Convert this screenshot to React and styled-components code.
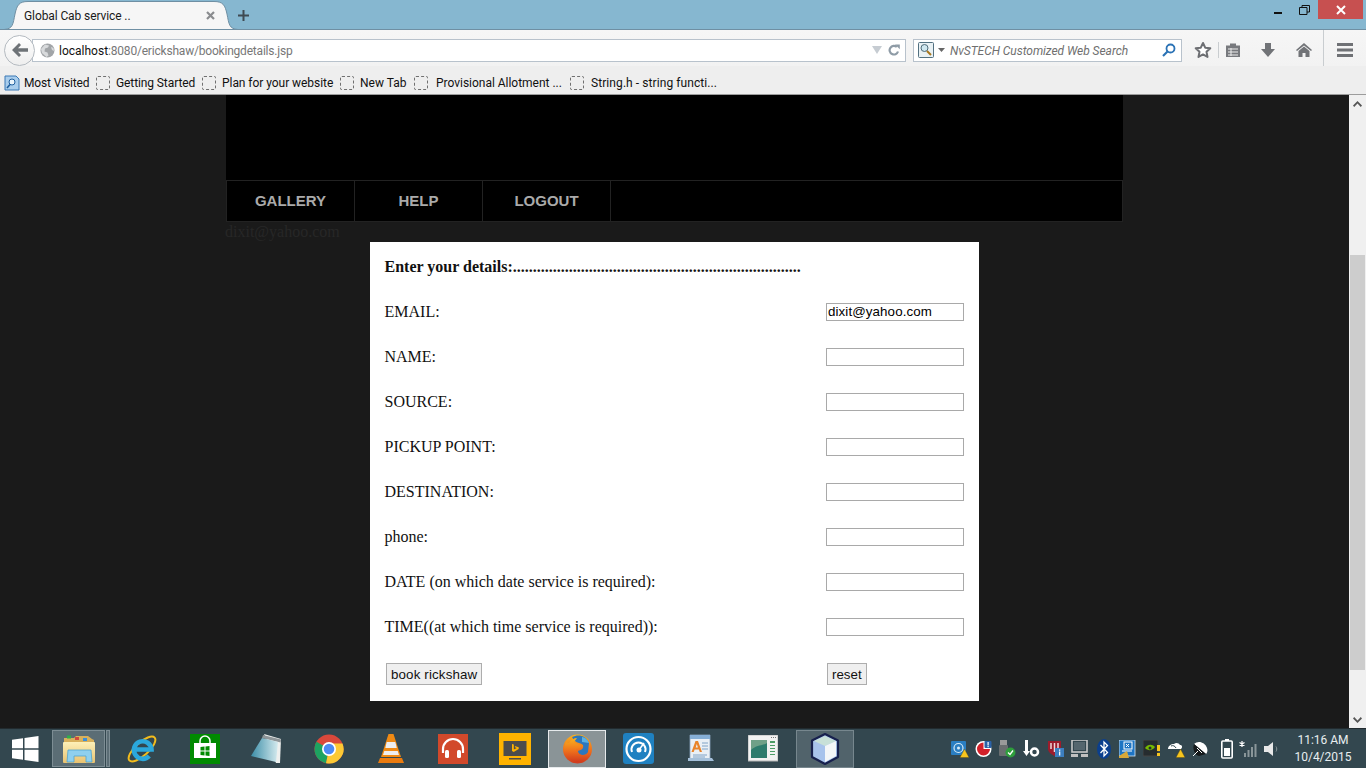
import React from 'react';
import styled, { createGlobalStyle } from 'styled-components';

const Global = createGlobalStyle`
  html, body { margin: 0; padding: 0; height: 768px; overflow: hidden; background: #1a1a1a; }
  #root { height: 768px; }
  * { box-sizing: border-box; }
`;
const UI = `"Roboto", "Noto Sans", sans-serif`;

const Screen = styled.div`display:flex;flex-direction:column;width:1366px;height:768px;overflow:hidden;`;
const TitleBar = styled.div`height:30px;background:#86b7d0;border-bottom:1px solid #6f8fa3;display:flex;align-items:flex-start;flex:none;padding-left:4px;`;
const Tab = styled.div`position:relative;width:234px;height:30px;margin-bottom:-1px;display:flex;align-items:center;padding:1px 0 0 20px;font:12px ${UI};color:#1a1a1a;z-index:1;`;
const TabShape = styled.svg`position:absolute;left:0;top:0;z-index:-1;`;
const TabTitle = styled.span`flex:1;letter-spacing:-.1px;`;
const TabClose = styled.svg`margin-right:23px;`;
const NewTab = styled.svg`margin:10px 0 0 0;`;
const WinButtons = styled.div`margin-left:auto;display:flex;height:19px;align-items:center;padding-right:3px;`;
const WinBtn = styled.div`width:${p => p.$w}px;height:19px;display:flex;align-items:center;justify-content:center;background:${p => p.$close ? '#c75050' : 'transparent'};`;

const NavBar = styled.div`height:36px;background:linear-gradient(#f6f6f6,#f2f2f2);display:flex;align-items:center;flex:none;padding:4px 0 0 4px;`;
const BackBtn = styled.div`width:31px;height:31px;border-radius:50%;background:linear-gradient(#fff,#eee);border:1px solid #b4bac0;display:flex;align-items:center;justify-content:center;z-index:1;flex:none;`;
const UrlBar = styled.div`margin-left:-3px;flex:none;width:874px;height:23px;background:#fff;border:1px solid #b8c2cc;display:flex;align-items:center;padding:0 5px 0 7px;font:12px ${UI};`;
const Host = styled.span`color:#111;margin-left:4px;padding-top:2px;`;
const Path = styled.span`color:#777;flex:1;letter-spacing:-.2px;padding-top:2px;`;
const SearchBar = styled.div`margin-left:7px;width:269px;height:23px;background:#fff;border:1px solid #b8c2cc;display:flex;align-items:center;padding:0 5px 0 4px;font:italic 12px ${UI};color:#6f6f6f;flex:none;`;
const SearchText = styled.span`flex:1;margin-left:5px;letter-spacing:-.05px;padding-top:2px;`;
const ToolIcons = styled.div`display:flex;align-items:center;height:36px;margin:-4px 0 0 10px;flex:none;`;
const ToolSlot = styled.div`width:${p => p.$w}px;display:flex;align-items:center;justify-content:center;padding-top:4px;`;
const ToolSep = styled.div`width:1px;height:${p => p.$h}px;margin:${p => p.$m};background:#c9cdd0;`;

const Bookmarks = styled.div`height:29px;background:#eeeeee;border-bottom:1px solid #9c9c9c;display:flex;align-items:center;padding:5px 0 0 4px;flex:none;font:12px ${UI};color:#111;`;
const Bookmark = styled.div`display:flex;align-items:center;gap:${p => p.$gap}px;width:${p => p.$w}px;white-space:nowrap;letter-spacing:${p => p.$ls}px;`;
const DashIcon = styled.span`width:14px;height:14px;border:1px dashed #707070;border-radius:2px;flex:none;`;

const Middle = styled.div`flex:1;display:flex;min-height:0;`;
const Viewport = styled.div`flex:1;background:#1a1a1a;overflow:hidden;`;
const Wrapper = styled.div`width:897px;margin:0 auto;`;
const Banner = styled.div`height:85px;background:#000;`;
const Menu = styled.nav`height:42px;background:#000;border:1px solid #222;display:flex;`;
const MenuItem = styled.div`width:${p => p.$w}px;border-right:1px solid #222;display:flex;align-items:center;justify-content:center;padding-bottom:1px;font:bold 15px "Liberation Sans",sans-serif;color:#aaaaaa;`;
const Ghost = styled.div`height:20px;font:16px/20px "Liberation Serif",serif;color:#272727;margin-left:-1px;`;
const FormCard = styled.form`width:609px;margin:0 auto;background:#fff;padding:2px 15px 2px 14.5px;font:16px "Liberation Serif",serif;color:#111;`;
const Row = styled.div`height:${p => p.$h || 45}px;display:grid;grid-template-columns:441.5px 138px;align-items:center;`;
const Heading = styled.div`height:45px;display:flex;align-items:center;font-weight:bold;`;
const Field = styled.input`width:138px;height:18px;margin:0;padding:0 0 0 1px;border:1px solid #a9a9a9;background:#fff;font:13.33px "Liberation Sans",sans-serif;letter-spacing:.1px;color:#000;outline:none;`;
const Btn = styled.button`justify-self:start;margin:0 0 0 ${p => p.$ml}px;height:22px;padding:0 4px;background:#efefef;border:1px solid #adadad;font:13.33px "Liberation Sans",sans-serif;letter-spacing:${p => p.$ls || 0}px;color:#111;`;

const Scrollbar = styled.div`width:17px;background:#f0f0f0;display:flex;flex-direction:column;align-items:center;flex:none;`;
const ScrollArrow = styled.svg`margin-top:${p => p.$mt}px;`;
const Thumb = styled.div`width:15px;height:415px;background:#cdcdcd;margin-top:148px;`;

const Taskbar = styled.div`height:40px;background:#33474f;border-top:1px solid #222b2f;display:flex;align-items:center;flex:none;color:#fff;`;
const StartSlot = styled.div`width:52px;height:39px;display:flex;align-items:center;justify-content:center;padding-right:2px;`;
const PinnedBtn = styled.div`width:53px;height:37px;background:#5b6d75;border:1px solid #7d8d94;display:flex;align-items:center;justify-content:center;`;
const StackEdge = styled.div`width:4px;height:37px;background:#5b6d75;border:1px solid #7d8d94;margin:0 2px 0 1px;`;
const Slot = styled.div`width:62px;height:39px;display:flex;align-items:center;justify-content:center;flex:none;`;
const ActiveBtn = styled.div`width:58px;height:38px;display:flex;align-items:center;justify-content:center;background:${p => p.$bright ? '#8a9497' : '#51636b'};border:1px solid ${p => p.$bright ? '#e6eaec' : '#77878e'};`;
const Tray = styled.div`display:flex;align-items:center;margin-left:auto;padding-right:4px;flex:none;`;
const TrayIcon = styled.div`width:${p => p.$w}px;margin-left:${p => p.$ml || 0}px;height:24px;display:flex;align-items:center;justify-content:center;flex:none;`;
const Clock = styled.div`width:78px;flex:none;text-align:center;font:12px/17px ${UI};color:#e8eef0;padding-top:1px;white-space:nowrap;`;

const Star = () => <svg width="18" height="18" viewBox="0 0 18 18"><path d="M9 2l2.200 4.700 5.100.6-3.800 3.500 1 5.100L9 13.400l-4.500 2.500 1-5.100-3.800-3.500 5.100-.6z" fill="#fff" stroke="#6d6f73" strokeWidth="2" strokeLinejoin="round"/></svg>;
const Clip = () => <svg width="16" height="16" viewBox="0 0 16 16"><path d="M1 3.500h4V1.500h6v2h4V15H1z" fill="#77797d"/><path d="M3 7h10M3 10h10M3 13h10M6 6v8" stroke="#eee" strokeWidth="1"/></svg>;
const Down = () => <svg width="16" height="16" viewBox="0 0 16 16"><path d="M5 1h6v6h4l-7 8-7-8h4z" fill="#717377"/></svg>;
const Home = () => <svg width="16" height="16" viewBox="0 0 16 16"><path d="M8 1l8 7-1 1-7-5.600L1 9 0 8z" fill="#717377"/><path d="M2.500 9L8 4.600 13.500 9v6H9.500v-4h-3v4h-4z" fill="#717377"/></svg>;
const Burger = () => <svg width="16" height="14" viewBox="0 0 16 14"><path d="M0 0h16v3H0zM0 5.500h16v3H0zM0 11h16v3H0z" fill="#6f7175"/></svg>;
const Globe = () => <svg width="15" height="15" viewBox="0 0 15 15"><circle cx="7.500" cy="7.500" r="7" fill="#a2a5a8"/><path d="M5 1.500l4 1-1 2-3 1-.5 3 3 1 1 3-2 1.500L2 10 1 6zM11 4l2.500 1 .5 3-2-1z" fill="#d8dadc"/></svg>;

const WinLogo = () => <svg width="27" height="26" viewBox="0 0 27 26"><path d="M0 3.700L11 2.200V12.200H0zM12.500 2L26.500 0V12.200H12.500zM0 13.800H11V23.800L0 22.300zM12.500 13.800H26.500V26L12.500 24z" fill="#fff"/></svg>;
const Folder = () => <svg width="32" height="30" viewBox="0 0 32 30"><defs><linearGradient id="fo" x1="0" y1="0" x2="0" y2="1"><stop offset="0" stopColor="#fdf0b8"/><stop offset="1" stopColor="#e9c270"/></linearGradient></defs><path d="M1 4h10l2-2h12l4 3 2 1v22H1z" fill="#d8b05c"/><rect x="4" y="1.500" width="4" height="3" fill="#2fae4a"/><rect x="12" y="3" width="4" height="3" fill="#d24a3c"/><rect x="20" y="4" width="4" height="3" fill="#3c8fd8"/><rect x="0" y="8" width="32" height="21" rx="1" fill="url(#fo)"/><path d="M5 16h23l1 12h-6v-6H11v6H4z" fill="#8fd0ee" stroke="#4fa3cf" strokeWidth=".8"/></svg>;
const IE = () => <svg width="32" height="32" viewBox="0 0 32 32"><ellipse cx="15" cy="16" rx="17" ry="6.500" transform="rotate(-42 15 16)" fill="none" stroke="#f2bc1c" strokeWidth="2"/><path d="M7.500 16.500h17a8.800 8.800 0 1 0-2.300 6.500" fill="none" stroke="#2ba8dc" strokeWidth="4.600"/></svg>;
const Store = () => <svg width="30" height="30" viewBox="0 0 30 30"><rect width="30" height="30" fill="#008a00"/><path d="M4 9h22v15H4z" fill="#fff"/><path d="M10 9V7a5 5 0 0 1 10 0v2" fill="none" stroke="#fff" strokeWidth="1.500"/><path d="M10.500 13l4-.5V16.500h-4zM15.500 12.400l4-.5V16.500h-4zM10.500 17.500h4v4l-4-.5zM15.500 17.500h4V22l-4-.5z" fill="#008a00"/></svg>;
const Notepad = () => <svg width="32" height="30" viewBox="0 0 32 30"><defs><linearGradient id="np" x1="0" y1="0" x2="1" y2="0"><stop offset="0" stopColor="#3c8ea8"/><stop offset="1" stopColor="#d4eaee"/></linearGradient></defs><path d="M13 0L30 5 29 29 25 29z" fill="#eef0ee"/><path d="M12 1l18 4.500-.3 3L11 4z" fill="#8f9699"/><path d="M11 4L27 8 25 28 0 22z" fill="url(#np)"/></svg>;
const Chrome = () => <svg width="30" height="30" viewBox="0 0 30 30"><circle cx="15" cy="15" r="14.500" fill="#d9483b"/><path d="M15 15L2.500 7.700A14.500 14.500 0 0 0 12 29.200z" fill="#1da361"/><path d="M15 15l-3 14.200A14.500 14.500 0 0 0 28.500 9.500H15z" fill="#fcc934"/><circle cx="15" cy="15" r="7" fill="#fff"/><circle cx="15" cy="15" r="5.300" fill="#4c8bf5"/></svg>;
const VLC = () => <svg width="28" height="30" viewBox="0 0 28 30"><path d="M11.500 0h5L24 23H4z" fill="#f08a13"/><path d="M9.700 8h8.600l1.500 6H8.300zM7.300 17h13.400l1.300 4H6z" fill="#eeeeee"/><path d="M3 24h22l2 5H1z" fill="#ea7b0f"/></svg>;
const Music = () => <svg width="30" height="30" viewBox="0 0 30 30"><rect width="30" height="30" fill="#d2492b"/><path d="M5 19v-4a10 10 0 0 1 20 0v4" fill="none" stroke="#fff" strokeWidth="2.200"/><rect x="7" y="16" width="4" height="8" rx="1.500" fill="#fff"/><rect x="19" y="16" width="4" height="8" rx="1.500" fill="#fff"/></svg>;
const Bing = () => <svg width="32" height="32" viewBox="0 0 32 32"><rect width="32" height="32" fill="#ffb300"/><rect x="4.500" y="8" width="23" height="15" fill="#4c4c4c"/><rect x="10" y="25" width="12" height="1.500" fill="#4c4c4c"/><path d="M13 11l1.800.6v5l3-1.500-1.500-.7-.6-1.500 4 1.400v1.600l-5 3-1.700-1z" fill="#ffb300"/></svg>;
const Firefox = () => <svg width="31" height="31" viewBox="0 0 31 31"><defs><linearGradient id="ff" x1="0" y1="0" x2="0" y2="1"><stop offset="0" stopColor="#f9b21e"/><stop offset=".55" stopColor="#ee6f1c"/><stop offset="1" stopColor="#cf3a1e"/></linearGradient></defs><circle cx="15.500" cy="16" r="14.500" fill="url(#ff)"/><path d="M10 4c6-3 14-2 17 6l-1 9c-1 2-3 3-5 3-3 0-5-2-5-4 3-1 6-2 5-6-2-2-6-2-8-4-1-1-2-2-3-4z" fill="#2c77bd"/><path d="M20 4c3 0 6 3 7 6l-7-1z" fill="#5ab0e2"/><path d="M4 9c1 1 2 1 3 1 2-3 5-5 8-5-1 2-3 3-3 4 2 2 5 2 7 4 0 2-3 3-5 3 0 4 4 6 7 6 4 0 6-2 7-4l1 2c-1 5-7 9-13 9C9 29 2 23 2 16c0-2 1-5 2-7z" fill="url(#ff)"/></svg>;
const Gauge = () => <svg width="32" height="32" viewBox="0 0 32 32"><rect width="31" height="31" rx="3" fill="#1f81c1"/><circle cx="15.500" cy="16" r="12" fill="none" stroke="#fff" strokeWidth="2.200"/><path d="M9 19a7 7 0 1 1 13 0" fill="none" stroke="#fff" strokeWidth="2"/><circle cx="16" cy="17" r="2.500" fill="#fff"/><path d="M16 17l5-7" stroke="#fff" strokeWidth="1.500"/></svg>;
const Wordpad = () => <svg width="26" height="30" viewBox="0 0 26 30"><path d="M2 1h20v25H2z" fill="#e9eff5" stroke="#8ba3bd" strokeWidth=".8"/><path d="M2 1h20v4H2z" fill="#86afd6"/><path d="M0 24h24l2 3H0z" fill="#a5c0da"/><path d="M7.500 7h2.500l4 11h-2.200l-.9-2.500H6.600L5.700 18H3.500zm.2 6.500h2.200L8.800 10z" fill="#e9842a"/><path d="M14 9h6M14 12h6M14 15h6M5 21h14M5 23h12" stroke="#7fa2c6" strokeWidth="1"/></svg>;
const Browser = () => <svg width="30" height="27" viewBox="0 0 30 27"><rect width="30" height="26" fill="#f2f2f2" stroke="#b5b5b5"/><rect x="3" y="5" width="16" height="18" fill="#6fa088"/><path d="M3 15c6-6 12-4 16-7v15H3z" fill="#2d7b6d"/><path d="M22 6h5v2h-5zM22 10h5v1h-5zM22 13h5v1h-5zM22 16h5v1h-5zM22 19h5v1h-5z" fill="#4d9c66"/><path d="M23 2h1v1h-1zM25 2h1v1h-1zM27 2h1v1h-1z" fill="#777"/></svg>;
const Cube = () => <svg width="30" height="32" viewBox="0 0 30 32"><path d="M15 1L28 7.500V24L15 31 2 24V7.500z" fill="#a8c3ec" stroke="#17204d" strokeWidth="2.200" strokeLinejoin="round"/><path d="M15 3L26 8 15 13 4 8z" fill="#c8e0d8"/><path d="M15 13L26 8v15L15 29z" fill="#f4f6f8"/></svg>;

const Warn = ({ x = 9, y = 9 }) => <path transform={`translate(${x} ${y})`} d="M4.500 0L9 8.500H0z" fill="#f7c51e" stroke="#5a4a10" strokeWidth=".4"/>;
const T1 = () => <svg width="18" height="18" viewBox="0 0 18 18"><rect x="0" y="1" width="15" height="14" rx="1" fill="#2a7ec2"/><circle cx="7.500" cy="8" r="4.500" fill="none" stroke="#d8ecf8" strokeWidth="1.200"/><circle cx="7.500" cy="8" r="1.500" fill="#d8ecf8"/><Warn/></svg>;
const T2 = () => <svg width="18" height="18" viewBox="0 0 18 18"><circle cx="8.500" cy="9" r="8" fill="#fff"/><path d="M8.500 2.500a6.500 6.500 0 1 0 6.500 6.500H8.500z" fill="#d3202a"/><rect x="9.500" y="1" width="7" height="7" rx="1" fill="#2a62a8"/><rect x="12.500" y="2" width="1.200" height="3.500" fill="#fff"/><rect x="12.500" y="6" width="1.200" height="1.200" fill="#fff"/></svg>;
const T3 = () => <svg width="18" height="18" viewBox="0 0 18 18"><rect x="2" y="0" width="7" height="5" fill="#9a9a9a"/><rect x="1" y="5" width="9" height="11" rx="1" fill="#6a6e70"/><circle cx="12.500" cy="12.500" r="5" fill="#2e9e3c"/><path d="M10 12.500l2 2 3-4" fill="none" stroke="#fff" strokeWidth="1.300"/></svg>;
const T4 = () => <svg width="18" height="18" viewBox="0 0 18 18"><path d="M3 0h3v11h2l-3.500 5L1 11h2z" fill="#fff"/><circle cx="12.500" cy="12" r="3.500" fill="none" stroke="#fff" strokeWidth="2.500"/></svg>;
const T5 = () => <svg width="18" height="18" viewBox="0 0 18 18"><path d="M1 1h13v8c0 3-3 5-6.500 7C4 14 1 12 1 9z" fill="#9c1c2c"/><path d="M4 3v6M7.500 3v9M11 3v6" stroke="#f0d8da" strokeWidth="1.500"/><rect x="8" y="8" width="9" height="9" fill="#3c7fc0"/><rect x="12" y="9.500" width="1.300" height="1.300" fill="#fff"/><rect x="12" y="11.500" width="1.300" height="4" fill="#fff"/></svg>;
const T6 = () => <svg width="18" height="18" viewBox="0 0 18 18"><rect x="1" y="0" width="15" height="12" fill="none" stroke="#c9c9c9" strokeWidth="1.600"/><rect x="3" y="2" width="11" height="8" fill="#55666e"/><rect x="0" y="14" width="7" height="3" fill="#c0c0c0"/><rect x="10" y="14" width="7" height="3" fill="#c0c0c0"/></svg>;
const T7 = () => <svg width="14" height="20" viewBox="0 0 14 20"><ellipse cx="7" cy="10" rx="7" ry="10" fill="#0b3f8e"/><path d="M3.500 6l7 7.500L7 17V3l3.500 3.500-7 7.500" fill="none" stroke="#fff" strokeWidth="1.300"/></svg>;
const T8 = () => <svg width="18" height="18" viewBox="0 0 18 18"><rect width="16" height="16" fill="#1d74c4" stroke="#d8e8f5" strokeWidth=".8"/><rect x="5" y="2" width="8" height="7" fill="none" stroke="#fff"/><path d="M7 4l3 3M10 4L7 7M3 11h10" stroke="#fff"/><path d="M0 16l8-5 2 7H0z" fill="#d9a838"/></svg>;
const T9 = () => <svg width="18" height="18" viewBox="0 0 18 18"><rect width="15" height="16" rx="1" fill="#262c2f" stroke="#444"/><path d="M2 8c3-4 7-4 10-1-3 4-7 4-10 1z" fill="#76b900"/><circle cx="7" cy="8" r="1.500" fill="#262c2f"/><rect x="14" y="5" width="3" height="6" fill="#f7c51e"/><rect x="14" y="13" width="3" height="3" fill="#f7c51e"/></svg>;
const T10 = () => <svg width="18" height="18" viewBox="0 0 18 18"><path d="M1 9c0-3 3-5 6-5 2-2 5-1 6 1 2 0 3 2 1 4H2z" fill="#fff"/><path d="M4 6c2-1 4 0 5 2" fill="none" stroke="#33474f"/><Warn/></svg>;
const T11 = () => <svg width="18" height="18" viewBox="0 0 18 18"><path d="M3 4c4-4 11-2 13 4 1 3 0 5-1 6L3 4z" fill="#fff"/><path d="M3 4l12 10-7 2C4 15 1 9 3 4z" fill="#14181a"/><path d="M6 8l5 5M2 16l5-5" stroke="#fff"/></svg>;
const T12 = () => <svg width="12" height="20" viewBox="0 0 12 20"><rect x="4" y="0" width="4" height="2" fill="#fff"/><rect x=".8" y="2" width="10.400" height="17" rx="1" fill="#33474f" stroke="#fff" strokeWidth="1.600"/><rect x="3" y="9" width="6" height="8" fill="#fff"/></svg>;
const T13 = () => <svg width="18" height="18" viewBox="0 0 18 18"><path d="M3 1v6M0.500 2.500l5 3M5.500 2.500l-5 3" stroke="#fff" strokeWidth="1.200"/><path d="M5 13h2v4H5zM8.500 10h2v7h-2zM12 7h2v10h-2zM15.500 4h2v13h-2z" fill="#8a9699"/></svg>;
const T14 = () => <svg width="18" height="18" viewBox="0 0 18 18"><path d="M1 6h4l5-4v14l-5-4H1z" fill="#e8e8e8"/><path d="M13 6.500c1 1.500 1 3.500 0 5" fill="none" stroke="#8a9699" strokeWidth="1"/></svg>;

const apps = [IE, Store, Notepad, Chrome, VLC, Music, Bing];
const after = [Gauge, Wordpad, Browser];
const bookmarks = [
  ['Getting Started', 106, 6, -.1], ['Plan for your website', 138, 6, -.05], ['New Tab', 74, 6, 0],
  ['Provisional Allotment ...', 156, 8, -.02], ['String.h - string functi...', 150, 7, .08],
];
const fields = ['EMAIL:', 'NAME:', 'SOURCE:', 'PICKUP POINT:', 'DESTINATION:', 'phone:', 'DATE (on which date service is required):', 'TIME((at which time service is required)):'];
const tray = [[T1, 24], [T2, 24], [T3, 22], [T4, 26], [T5, 24], [T6, 24], [T7, 24], [T8, 24], [T9, 24], [T10, 24], [T11, 24], [T12, 18, 6], [T13, 24], [T14, 24]];

export default function App() {
  return (
    <Screen>
      <Global />
      <TitleBar>
        <Tab>
          <TabShape width="234" height="30" viewBox="0 0 234 30">
            <path d="M0 29.500C9 29 9 24 11 14 13 5 15 1.500 24 1.500H210c9 0 11 3.500 13 12.500 2 10 2 15 11 15.500z" fill="#f6f6f6" stroke="#6f8fa3"/>
          </TabShape>
          <TabTitle>Global Cab service ..</TabTitle>
          <TabClose width="9" height="9" viewBox="0 0 9 9"><path d="M1 1l7 7M8 1L1 8" stroke="#8a8c8f" strokeWidth="2.200"/></TabClose>
        </Tab>
        <NewTab width="11" height="11" viewBox="0 0 11 11"><path d="M5.500 0v11M0 5.500h11" stroke="#3f4a52" strokeWidth="2"/></NewTab>
        <WinButtons>
          <WinBtn $w={24}><svg width="8" height="8" viewBox="0 0 8 8"><rect width="8" height="2" y="6" fill="#111"/></svg></WinBtn>
          <WinBtn $w={28}><svg width="11" height="10" viewBox="0 0 11 10"><path d="M3 2.500V.500h7.500V7H8M.500 2.500h7.500V9.500H.500z" fill="none" stroke="#111"/></svg></WinBtn>
          <WinBtn $w={45} $close><svg width="10" height="10" viewBox="0 0 10 10"><path d="M1 1l8 8M9 1L1 9" stroke="#fff" strokeWidth="2"/></svg></WinBtn>
        </WinButtons>
      </TitleBar>
      <NavBar>
        <BackBtn><svg width="16" height="14" viewBox="0 0 16 14"><path d="M7 0l2 2-3 3.300h10v3.400H6L9 12l-2 2-7-7z" fill="#6e7377"/></svg></BackBtn>
        <UrlBar>
          <Globe />
          <Host>localhost</Host><Path>:8080/erickshaw/bookingdetails.jsp</Path>
          <svg width="10" height="8" viewBox="0 0 10 8"><path d="M0 0h10L5 8z" fill="#c6ccd2"/></svg>
          <svg width="12" height="12" viewBox="0 0 12 12" style={{ marginLeft: 6 }}><path d="M10 7.500A4.300 4.300 0 1 1 8.800 3" fill="none" stroke="#8e9ba6" strokeWidth="2.200"/><path d="M7 0h4.800v4.800z" fill="#8e9ba6" transform="translate(0 .5)"/></svg>
        </UrlBar>
        <SearchBar>
          <svg width="16" height="16" viewBox="0 0 16 16"><rect x=".5" y=".5" width="15" height="15" rx="1" fill="#e9f1f4" stroke="#527080"/><circle cx="6.500" cy="6" r="3.500" fill="#cfe7ef" stroke="#4e6a78"/><path d="M9 9l4 4" stroke="#a8761c" strokeWidth="2"/></svg>
          <svg width="7" height="4" viewBox="0 0 7 4" style={{ marginLeft: 4 }}><path d="M0 0h7L3.500 4z" fill="#666"/></svg>
          <SearchText>NvSTECH Customized Web Search</SearchText>
          <svg width="14" height="14" viewBox="0 0 14 14"><circle cx="8.500" cy="5.500" r="4" fill="none" stroke="#2a72b5" strokeWidth="1.800"/><path d="M5.500 8.500L1 13" stroke="#2a72b5" strokeWidth="2.200"/></svg>
        </SearchBar>
        <ToolIcons>
          <ToolSlot $w={22}><Star /></ToolSlot>
          <ToolSep $h={16} $m="4px 0 0 4px" />
          <ToolSlot $w={28}><Clip /></ToolSlot>
          <ToolSlot $w={42}><Down /></ToolSlot>
          <ToolSlot $w={30}><Home /></ToolSlot>
          <ToolSlot $w={4} />
          <ToolSep $h={36} $m="0" />
          <ToolSlot $w={42}><Burger /></ToolSlot>
        </ToolIcons>
      </NavBar>
      <Bookmarks>
        <Bookmark $w={92} $gap={4} $ls={-.15}>
          <svg width="16" height="16" viewBox="0 0 16 16"><path d="M1 1h11l3 3v11H1z" fill="#a9cdec" stroke="#3a78b5"/><circle cx="8" cy="7" r="3" fill="#eaf4fb" stroke="#1f5f9e"/><path d="M6 9.500L3 13" stroke="#1f5f9e" strokeWidth="1.600"/></svg>
          <span>Most Visited</span>
        </Bookmark>
        {bookmarks.map(([t, w, g, ls]) => <Bookmark key={t} $w={w} $gap={g} $ls={ls}><DashIcon /><span>{t}</span></Bookmark>)}
      </Bookmarks>
      <Middle>
        <Viewport>
          <Wrapper>
            <Banner />
            <Menu>
              <MenuItem $w={128}>GALLERY</MenuItem>
              <MenuItem $w={128}>HELP</MenuItem>
              <MenuItem $w={128}>LOGOUT</MenuItem>
            </Menu>
            <Ghost>dixit@yahoo.com</Ghost>
          </Wrapper>
          <FormCard onSubmit={e => e.preventDefault()}>
            <Heading>Enter your details:{'.'.repeat(72)}</Heading>
            {fields.map((f, i) => (
              <Row key={f}>
                <span>{f}</span>
                <Field defaultValue={i === 0 ? 'dixit@yahoo.com' : ''} />
              </Row>
            ))}
            <Row $h={50}>
              <Btn type="button" $ml={1.5} $ls={0.15}>book rickshaw</Btn>
              <Btn type="reset" $ml={1}>reset</Btn>
            </Row>
          </FormCard>
        </Viewport>
        <Scrollbar>
          <ScrollArrow $mt={6} width="9" height="6" viewBox="0 0 9 6"><path d="M0 4.500L4.500 0 9 4.500 7.800 6 4.500 2.500 1.200 6z" fill="#555"/></ScrollArrow>
          <Thumb />
          <ScrollArrow $mt={47} width="9" height="6" viewBox="0 0 9 6"><path d="M0 1.500L4.500 6 9 1.500 7.800 0 4.500 3.500 1.200 0z" fill="#555"/></ScrollArrow>
        </Scrollbar>
      </Middle>
      <Taskbar>
        <StartSlot><WinLogo /></StartSlot>
        <PinnedBtn><Folder /></PinnedBtn>
        <StackEdge />
        {apps.map((A, i) => <Slot key={i}><A /></Slot>)}
        <Slot><ActiveBtn $bright><Firefox /></ActiveBtn></Slot>
        {after.map((A, i) => <Slot key={i}><A /></Slot>)}
        <Slot><ActiveBtn><Cube /></ActiveBtn></Slot>
        <Tray>
          {tray.map(([I, w, ml], i) => <TrayIcon key={i} $w={w} $ml={ml}><I /></TrayIcon>)}
          <Clock>11:16 AM<br />10/4/2015</Clock>
        </Tray>
      </Taskbar>
    </Screen>
  );
}
